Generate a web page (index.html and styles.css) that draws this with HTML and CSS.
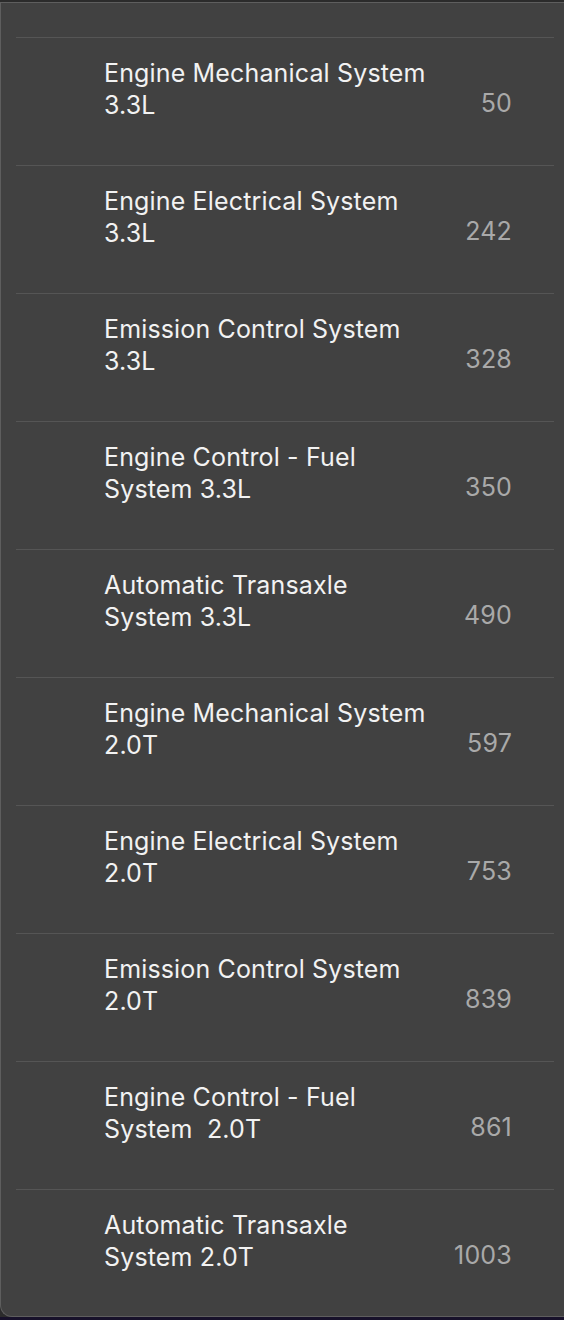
FILE: index.html
```html
<!DOCTYPE html>
<html lang="en">
<head>
  <meta charset="UTF-8">
  <meta name="viewport" content="width=device-width, initial-scale=1.0">
  <title>Sections</title>
  <link rel="stylesheet" href="styles.css">
</head>
<body>
  <div class="window">
    <div class="panel">
      <div class="panel-head"></div>
      <ul class="toc">
        <li class="toc-row"><span class="toc-title">Engine Mechanical System 3.3L</span><span class="toc-page">50</span></li>
        <li class="toc-row"><span class="toc-title">Engine Electrical System 3.3L</span><span class="toc-page">242</span></li>
        <li class="toc-row"><span class="toc-title">Emission Control System 3.3L</span><span class="toc-page">328</span></li>
        <li class="toc-row"><span class="toc-title">Engine Control - Fuel System 3.3L</span><span class="toc-page">350</span></li>
        <li class="toc-row"><span class="toc-title">Automatic Transaxle System 3.3L</span><span class="toc-page">490</span></li>
        <li class="toc-row"><span class="toc-title">Engine Mechanical System 2.0T</span><span class="toc-page">597</span></li>
        <li class="toc-row"><span class="toc-title">Engine Electrical System 2.0T</span><span class="toc-page">753</span></li>
        <li class="toc-row"><span class="toc-title">Emission Control System 2.0T</span><span class="toc-page">839</span></li>
        <li class="toc-row"><span class="toc-title">Engine Control - Fuel System&nbsp; 2.0T</span><span class="toc-page">861</span></li>
        <li class="toc-row"><span class="toc-title">Automatic Transaxle System 2.0T</span><span class="toc-page">1003</span></li>
      </ul>
    </div>
  </div>
</body>
</html>
```

FILE: styles.css
```css
html, body { margin: 0; padding: 0; }
body { background: #17112a; font-family: Inter, "Noto Sans", sans-serif; height: 1320px; overflow: hidden; }
.window { background: #2b2b2b; padding-top: 2px; }
.panel { background: #414141; border-top: 1px solid #5e5e5e; border-left: 1px solid #5e5e5e; border-bottom: 1px solid #5e5e5e; border-bottom-left-radius: 12px; height: 1313px; }
.panel-head { height: 34px; }
.toc { list-style: none; margin: 0 10px 0 15px; padding: 0; }
.toc-row { display: flex; justify-content: space-between; align-items: center; height: 127px; border-top: 1px solid #555555; padding: 0 42px 0 88px; box-sizing: content-box; }
.toc-title { align-self: flex-start; margin-top: 19px; width: 330px; font-size: 25px; letter-spacing: 0.15px; line-height: 32px; color: #f2f2f2; }
.toc-page { font-size: 25px; letter-spacing: 0.2px; line-height: 32px; color: #a9a9a9; margin-top: 2px; }
```
